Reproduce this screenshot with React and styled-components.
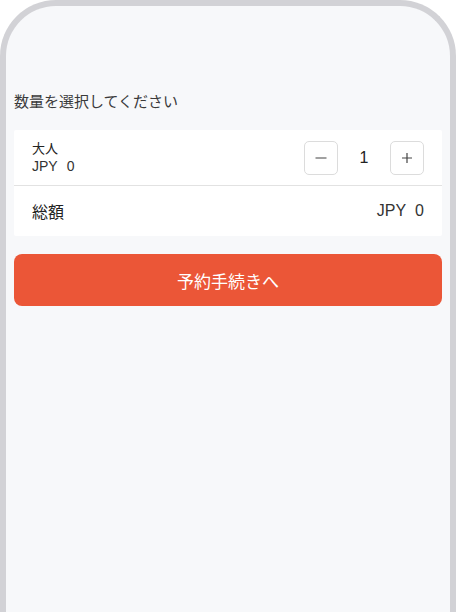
import React, { useState } from 'react';
import styled, { createGlobalStyle } from 'styled-components';

const GlobalStyle = createGlobalStyle`
    html, body {
        margin: 0;
        padding: 0;
        background: #ffffff;
    }
    body {
        font-family: "Liberation Sans", "Noto Sans CJK JP", sans-serif;
        color: #222;
    }
    * {
        box-sizing: border-box;
    }
`;

const App = () => {
    const [count, setCount] = useState(1);
    const price = 0;

    return (
        <>
            <GlobalStyle />
            <Frame>
                <Screen>
                    <Title>数量を選択してください</Title>
                    <Card>
                        <TicketRow>
                            <TicketInfo>
                                <TicketName>大人</TicketName>
                                <Price>JPY<Amount>{price}</Amount></Price>
                            </TicketInfo>
                            <Stepper>
                                <StepButton onClick={() => setCount(Math.max(0, count - 1))} aria-label="decrease">
                                    <svg width="14" height="14" viewBox="0 0 14 14">
                                        <path d="M1.5 7h11" stroke="#444" strokeWidth="1.2" />
                                    </svg>
                                </StepButton>
                                <Count>{count}</Count>
                                <StepButton onClick={() => setCount(count + 1)} aria-label="increase">
                                    <svg width="14" height="14" viewBox="0 0 14 14">
                                        <path d="M2 7h10M7 2v10" stroke="#444" strokeWidth="1.2" />
                                    </svg>
                                </StepButton>
                            </Stepper>
                        </TicketRow>
                        <TotalRow>
                            <TotalLabel>総額</TotalLabel>
                            <TotalPrice>JPY<Amount>{price * count}</Amount></TotalPrice>
                        </TotalRow>
                    </Card>
                    <SubmitButton>予約手続きへ</SubmitButton>
                </Screen>
            </Frame>
        </>
    );
};

export default App;

/** Layout */
const Frame = styled.div`
    min-height: 100vh;
    border: 6px solid #d2d2d6;
    border-bottom: none;
    border-radius: 56px 56px 0 0;
    background: #f7f8fa;
    overflow: hidden;
`;

const Screen = styled.div`
    display: flex;
    flex-direction: column;
    padding: 86px 8px 0;
`;

const Title = styled.div`
    font-size: 15px;
    line-height: 20px;
    color: #3a3a3a;
    margin-bottom: 18px;
`;

const Card = styled.div`
    background: #fff;
    border-radius: 2px;
`;

const TicketRow = styled.div`
    display: flex;
    align-items: center;
    justify-content: space-between;
    height: 56px;
    padding: 0 18px;
    border-bottom: 1px solid #e2e2e2;
`;

const TicketInfo = styled.div`
    display: flex;
    flex-direction: column;
`;

const TicketName = styled.div`
    font-size: 13px;
    line-height: 17px;
    color: #222;
`;

const Price = styled.div`
    font-size: 14px;
    line-height: 18px;
    color: #333;
`;

const Amount = styled.span`
    margin-left: 9px;
`;

const Stepper = styled.div`
    display: flex;
    align-items: center;
`;

const StepButton = styled.button`
    display: flex;
    align-items: center;
    justify-content: center;
    width: 34px;
    height: 34px;
    padding: 0;
    background: #fff;
    border: 1px solid #dcdcdc;
    border-radius: 5px;
    cursor: pointer;
`;

const Count = styled.div`
    width: 52px;
    text-align: center;
    font-size: 16px;
    color: #222;
`;

const TotalRow = styled.div`
    display: flex;
    align-items: center;
    justify-content: space-between;
    height: 50px;
    padding: 0 18px;
`;

const TotalLabel = styled.div`
    font-size: 16px;
    color: #222;
`;

const TotalPrice = styled.div`
    font-size: 16px;
    color: #333;
`;

const SubmitButton = styled.button`
    margin-top: 18px;
    height: 52px;
    border: none;
    border-radius: 8px;
    background: #eb5637;
    color: #fff;
    font-family: "Liberation Sans", "Noto Sans CJK JP", sans-serif;
    font-size: 17px;
    cursor: pointer;
`;
